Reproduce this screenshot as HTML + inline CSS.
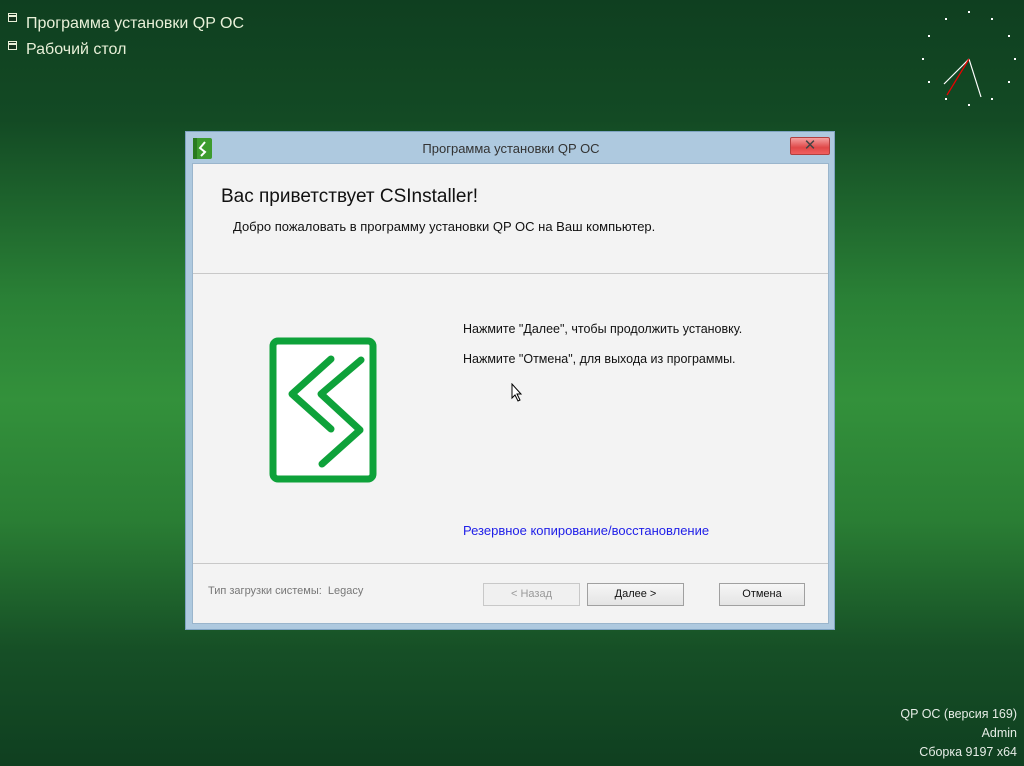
<!DOCTYPE html>
<html><head><meta charset="utf-8"><style>
*{margin:0;padding:0;box-sizing:border-box}
body{width:1024px;height:766px;overflow:hidden;position:relative;font-family:"Liberation Sans","DejaVu Sans",sans-serif;
background:linear-gradient(to bottom,#0f3f20 0px,#134a24 120px,#2a8136 300px,#33913b 400px,#2a7e34 520px,#164f26 650px,#0f3f20 766px);}
.t{position:absolute;white-space:nowrap}
.dt{color:#e8f0d8;font-size:16px;left:26px}
.ic{position:absolute;left:8px;width:9px;height:9px;border:1px solid #e8f0d8;background:#16331f}
.ic:before{content:"";position:absolute;left:0;right:0;top:1px;height:2px;background:#e8f0d8}
.br{right:7px;color:#e6ece6;font-size:12.5px;text-align:right}
#dlg{position:absolute;left:185px;top:131px;width:650px;height:499px;background:#aec9df;border:1px solid #7fa3c2}
#body{position:absolute;left:6px;top:31px;width:637px;height:461px;background:#f3f3f3;border:1px solid #9ab5cc}
.sep{position:absolute;left:0;right:0;height:1px;background:#c8c8c8}
.btn{position:absolute;top:419px;height:23px;border:1px solid #a0a0a0;background:linear-gradient(#f6f6f6,#e4e4e4);font-size:11px;text-align:center;line-height:21px;color:#111}
</style></head><body>
<div class="ic" style="top:13px"></div><div class="t dt" style="top:15px">Программа установки QP OC</div>
<div class="ic" style="top:41px"></div><div class="t dt" style="top:41px">Рабочий стол</div>

<svg style="position:absolute;left:900px;top:0" width="124" height="110">
<g fill="#fff"><rect x="68" y="11" width="2" height="2"/><rect x="45" y="18" width="2" height="2"/><rect x="91" y="18" width="2" height="2"/><rect x="28" y="35" width="2" height="2"/><rect x="108" y="35" width="2" height="2"/><rect x="22" y="58" width="2" height="2"/><rect x="114" y="58" width="2" height="2"/><rect x="28" y="81" width="2" height="2"/><rect x="108" y="81" width="2" height="2"/><rect x="45" y="98" width="2" height="2"/><rect x="91" y="98" width="2" height="2"/><rect x="68" y="104" width="2" height="2"/></g>
<line x1="69" y1="59" x2="44" y2="84" stroke="#fff" stroke-width="1.2"/>
<line x1="69" y1="59" x2="81" y2="97" stroke="#fff" stroke-width="1.2"/>
<line x1="69" y1="59" x2="47" y2="95" stroke="#e00" stroke-width="1.2"/>
</svg>

<div id="dlg">
<svg style="position:absolute;left:7px;top:6px" width="20" height="22"><rect x="0" y="0" width="19" height="21" rx="2" fill="#3d9b2e"/><rect x="0" y="0" width="4" height="21" fill="#2a7a20"/><path d="M12 4 L7 10 L12 14 L8 18" stroke="#fff" stroke-width="2" fill="none"/></svg>
<div class="t" style="left:0;width:650px;text-align:center;top:9px;font-size:13px;color:#333">Программа установки QP OC</div>
<div style="position:absolute;left:604px;top:5px;width:40px;height:18px;border:1px solid #b04040;border-radius:2px;background:linear-gradient(#f4a0a0,#e04848 60%,#f06060);color:#444;font-weight:bold;font-size:15px;text-align:center;line-height:16px">✕</div>
<div id="body">
<div class="t" style="left:28px;top:22px;font-size:19px;color:#111">Вас приветствует CSInstaller!</div>
<div class="t" style="left:40px;top:55px;font-size:13px;color:#111">Добро пожаловать в программу установки QP OC на Ваш компьютер.</div>
<div class="sep" style="top:109px"></div>
<svg style="position:absolute;left:75px;top:172px" width="110" height="148">
<rect x="5" y="5" width="100" height="138" rx="5" fill="#fff" stroke="#0ea23a" stroke-width="7"/>
<path d="M63 23 L24 58 L63 93" stroke="#0ea23a" stroke-width="7" fill="none" stroke-linecap="round" stroke-linejoin="round"/>
<path d="M93 24 L53 58 L92 94 L54 128" stroke="#0ea23a" stroke-width="7" fill="none" stroke-linecap="round" stroke-linejoin="round"/>
</svg>
<div class="t" style="left:270px;top:158px;font-size:12.5px;color:#111">Нажмите "Далее", чтобы продолжить установку.</div>
<div class="t" style="left:270px;top:188px;font-size:12.5px;color:#111">Нажмите "Отмена", для выхода из программы.</div>
<svg style="position:absolute;left:318px;top:219px" width="12" height="20"><path d="M1 1 L1 15 L4 12 L7 18 L9 17 L6 11 L10 11 Z" fill="#fff" stroke="#000" stroke-width="1"/></svg>
<div class="t" style="left:270px;top:359px;font-size:13px;color:#2020e8">Резервное копирование/восстановление</div>
<div class="sep" style="top:399px"></div>
<div class="t" style="left:15px;top:421px;font-size:11px;color:#777">Тип загрузки системы:&nbsp; Legacy</div>
<div class="btn" style="left:290px;width:97px;color:#999;border-color:#c8c8c8;background:#f0f0f0">&lt; Назад</div>
<div class="btn" style="left:394px;width:97px">Далее &gt;</div>
<div class="btn" style="left:526px;width:86px">Отмена</div>
</div>
</div>

<div class="t br" style="top:707px">QP OC (версия 169)</div>
<div class="t br" style="top:726px">Admin</div>
<div class="t br" style="top:745px">Сборка 9197 x64</div>
</body></html>
